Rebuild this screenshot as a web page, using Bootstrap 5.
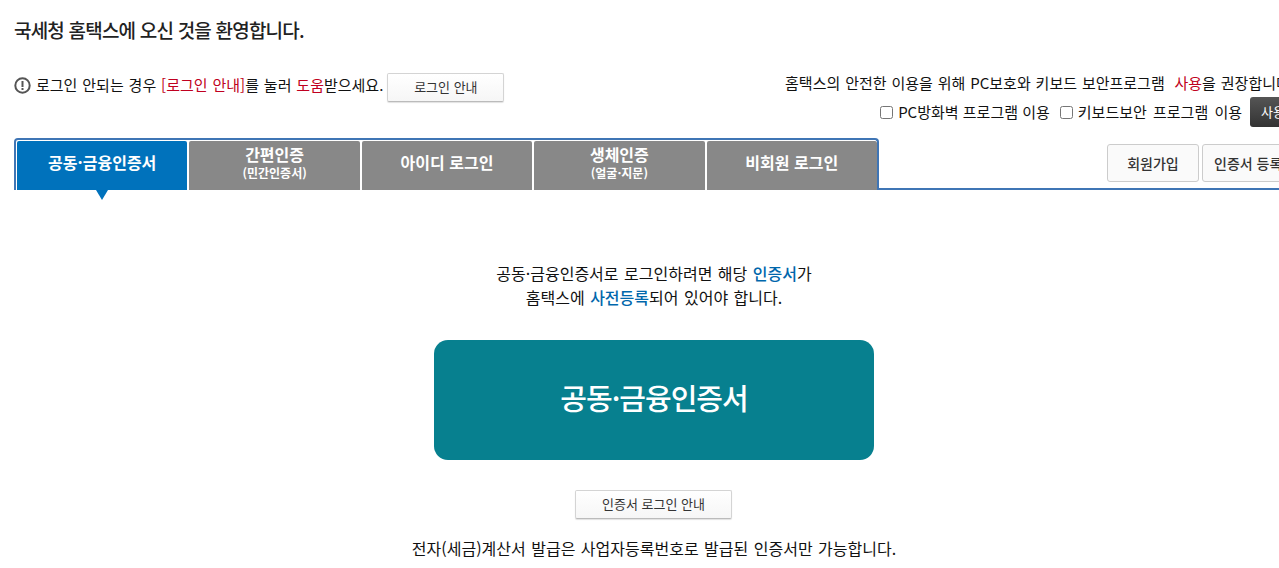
<!DOCTYPE html>
<html lang="ko">
<head>
<meta charset="utf-8">
<title>홈택스 로그인</title>
<link rel="stylesheet" href="https://cdn.jsdelivr.net/npm/bootstrap@5.3.0/dist/css/bootstrap.min.css">
<style>
html,body{overflow:hidden;height:100%;}
body{font-family:"Noto Sans CJK KR","Noto Sans",sans-serif;font-size:15px;color:#111;background:#fff;}
.page-wrap{width:1280px;margin-left:14px;}
.hello{font-size:19px;font-weight:500;color:#222;line-height:28px;padding-top:16px;margin:0;letter-spacing:-.8px;}
.info-row{height:69px;margin-top:25px;}
.info-left{white-space:nowrap;line-height:22px;word-spacing:.7px;}
.info-msg{margin-top:5px;}
.info-right{width:100%;}
.info-right-line{height:24px;line-height:24px;white-space:nowrap;}
.first-line{margin-top:2px;word-spacing:.7px;}
.warn{color:#c00020;}
.ico{width:17px;height:17px;margin-right:5px;vertical-align:-3px;}
.btn-soft{display:inline-flex;align-items:center;justify-content:center;background:linear-gradient(#fff,#f6f6f6);border:1px solid #d4d4d4;border-bottom-color:#bbb;border-radius:2px;box-shadow:0 1px 1px rgba(0,0,0,.12);font-size:13px;color:#333;padding:0 0 2px;height:29px;word-spacing:0;}
.btn-guide{width:117px;margin:4px 0 0 4px;}
.btn-cert{width:157px;margin-right:1px;}
.btn-use{display:inline-flex;align-items:center;background:linear-gradient(#555,#333);color:#fff;border:0;border-radius:3px;height:30px;width:60px;padding:0 0 0 11px;font-size:13px;margin-left:8px;white-space:nowrap;}
.chk{appearance:none;width:13px;height:13px;border:1px solid #767676;border-radius:2.5px;background:#fff;margin:0 5px 0 0;vertical-align:-1px;}
.chk-label{margin-left:10px;word-spacing:2px;}
.options{justify-content:flex-end;margin-right:-16px;margin-top:2px;}
.tabs-line{height:52px;border-bottom:2px solid #3f75b5;align-items:stretch;}
.tab-box{display:flex;border:2px solid #3f75b5;border-bottom:0;border-radius:4px 4px 0 0;width:865px;padding:1px 0 0 1px;background:#fff;margin-bottom:-2px;}
.tab-item{flex:0 0 auto;width:170.4px;height:49px;margin-right:2px;padding-bottom:6px;background:#888;color:#fff;font-weight:700;font-size:16px;display:flex;flex-direction:column;align-items:center;justify-content:center;line-height:19px;border-radius:2px 2px 0 0;position:relative;text-decoration:none;}
.tab-item:last-child{margin-right:0;}
.tab-item small{font-size:12px;font-weight:700;line-height:16px;margin-top:1px;}
.tab-on{background:#0072bc;}
.tab-on::after{content:"";position:absolute;left:79px;top:100%;border-left:6px solid transparent;border-right:6px solid transparent;border-top:10px solid #0072bc;}
.side-btns{margin-left:228px;gap:3px;padding-top:6px;white-space:nowrap;}
.btn-side{display:inline-flex;align-items:center;justify-content:center;height:38px;background:#fafafa;border:1px solid #ccc;border-radius:3px;font-size:14px;font-weight:500;color:#333;padding:0;}
.btn-join{width:92px;}
.btn-reg{width:100px;justify-content:flex-start;padding-left:11px;}
.main-area{width:1280px;text-align:center;font-size:16px;word-spacing:1px;}
.lead-text{margin:71px 0 0;line-height:24px;}
.blue{color:#0067ac;font-weight:500;}
.big-cert{display:flex;align-items:center;justify-content:center;width:440px;height:120px;margin:31px auto 30px;padding:0 0 4px;background:#07808f;border:0;border-radius:14px;color:#fff;font-size:29px;font-weight:500;letter-spacing:-1px;}
.foot-note{margin:17px 0 0;line-height:24px;}
</style>
</head>
<body>
<div class="page-wrap">
  <h1 class="hello">국세청 홈택스에 오신 것을 환영합니다.</h1>
  <div class="info-row d-flex justify-content-between">
    <div class="info-left d-flex align-items-start flex-shrink-0">
      <span class="info-msg"><svg class="ico" viewBox="0 0 17 17"><circle cx="8.5" cy="8.5" r="7.2" fill="none" stroke="#555" stroke-width="2"/><rect x="7.5" y="4" width="2" height="6" fill="#555"/><rect x="7.5" y="11" width="2" height="2" fill="#555"/></svg>로그인 안되는 경우 <span class="warn">[로그인 안내]</span>를 눌러 <span class="warn">도움</span>받으세요.</span><button class="btn-soft btn-guide" type="button">로그인 안내</button>
    </div>
    <div class="info-right text-end">
      <div class="info-right-line first-line">홈택스의 안전한 이용을 위해 PC보호와 키보드 보안프로그램 &nbsp;<span class="warn">사용</span>을 권장합니다.</div>
      <div class="d-flex align-items-center options">
        <label class="info-right-line"><input class="chk" type="checkbox">PC방화벽 프로그램 이용</label>
        <label class="info-right-line chk-label"><input class="chk" type="checkbox">키보드보안 프로그램 이용</label>
        <button class="btn-use" type="button">사용</button>
      </div>
    </div>
  </div>
  <div class="tabs-line d-flex">
    <div class="tab-box flex-shrink-0">
      <a class="tab-item tab-on" href="#">공동·금융인증서</a>
      <a class="tab-item" href="#">간편인증<small>(민간인증서)</small></a>
      <a class="tab-item" href="#">아이디 로그인</a>
      <a class="tab-item" href="#">생체인증<small>(얼굴·지문)</small></a>
      <a class="tab-item" href="#">비회원 로그인</a>
    </div>
    <div class="side-btns d-flex align-items-start">
      <button class="btn-side btn-join" type="button">회원가입</button>
      <button class="btn-side btn-reg" type="button">인증서 등록</button>
    </div>
  </div>
  <div class="main-area">
    <p class="lead-text">공동·금융인증서로 로그인하려면 해당 <span class="blue">인증서</span>가<br>홈택스에 <span class="blue">사전등록</span>되어 있어야 합니다.</p>
    <button class="big-cert" type="button">공동·금융인증서</button>
    <button class="btn-soft btn-cert" type="button">인증서 로그인 안내</button>
    <p class="foot-note">전자(세금)계산서 발급은 사업자등록번호로 발급된 인증서만 가능합니다.</p>
  </div>
</div>
<script src="https://cdn.jsdelivr.net/npm/bootstrap@5.3.0/dist/js/bootstrap.bundle.min.js"></script>
</body>
</html>
